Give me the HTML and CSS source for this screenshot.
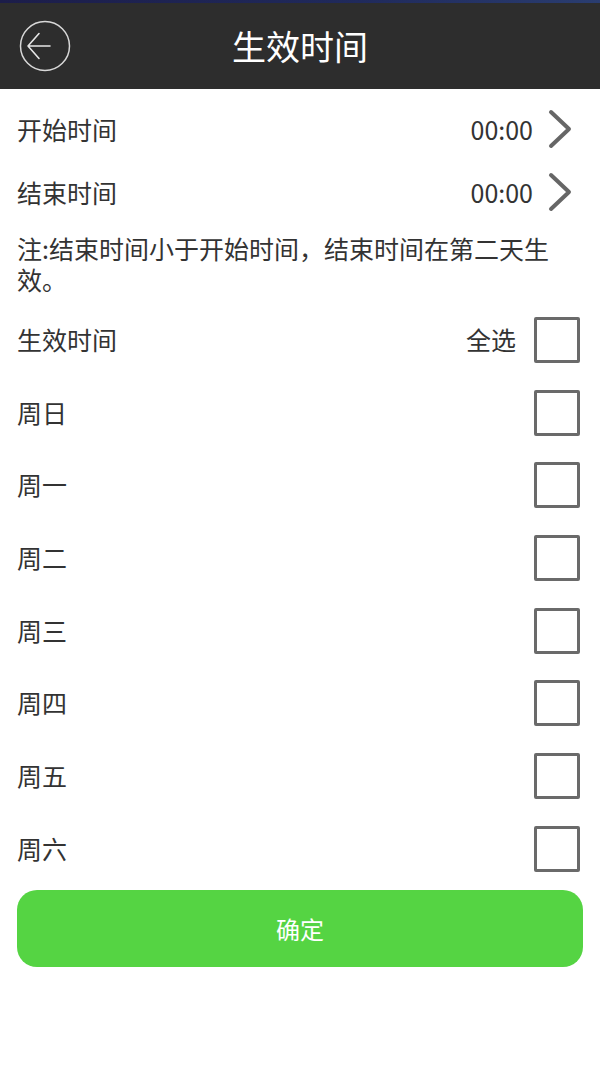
FILE: index.html
```html
<!DOCTYPE html>
<html lang="zh-CN">
<head>
    <meta charset="UTF-8">
    <meta name="viewport" content="width=device-width, initial-scale=1.0">
    <title>生效时间</title>
    <link rel="stylesheet" href="styles.css">
</head>
<body>
    <div class="status"></div>
    <header class="header">
        <button class="back" type="button">
            <svg width="52" height="52" viewBox="0 0 52 52">
                <circle cx="26" cy="26" r="24.5" fill="none" stroke="#d8d8d8" stroke-width="1.5"/>
                <path d="M9 26 H31 M20 13.5 L9 26 L20 38.5" fill="none" stroke="#e6e6e6" stroke-width="1.6" stroke-linecap="round" stroke-linejoin="round"/>
            </svg>
        </button>
        <h1 class="title">生效时间</h1>
    </header>

    <main class="content">
        <div class="time-row">
            <span>开始时间</span>
            <span class="time-value">00:00
                <svg class="chevron" width="26" height="40" viewBox="0 0 26 40">
                    <path d="M4 3 L22 20 L4 37" fill="none" stroke="#666" stroke-width="4" stroke-linecap="round" stroke-linejoin="round"/>
                </svg>
            </span>
        </div>
        <div class="time-row">
            <span>结束时间</span>
            <span class="time-value">00:00
                <svg class="chevron" width="26" height="40" viewBox="0 0 26 40">
                    <path d="M4 3 L22 20 L4 37" fill="none" stroke="#666" stroke-width="4" stroke-linecap="round" stroke-linejoin="round"/>
                </svg>
            </span>
        </div>

        <p class="note">注:结束时间小于开始时间，结束时间在第二天生效。</p>

        <div class="day-row">
            <span>生效时间</span>
            <label class="check-wrap">全选 <span class="box"></span></label>
        </div>
        <div class="day-row"><span>周日</span><span class="box"></span></div>
        <div class="day-row"><span>周一</span><span class="box"></span></div>
        <div class="day-row"><span>周二</span><span class="box"></span></div>
        <div class="day-row"><span>周三</span><span class="box"></span></div>
        <div class="day-row"><span>周四</span><span class="box"></span></div>
        <div class="day-row"><span>周五</span><span class="box"></span></div>
        <div class="day-row"><span>周六</span><span class="box"></span></div>

        <button class="confirm" type="button">确定</button>
    </main>
</body>
</html>
```

FILE: styles.css
```css
body {
    margin: 0;
    background-color: #fff;
    font-family: "Noto Sans CJK SC", "Noto Sans", sans-serif;
    color: #333;
}

.status {
    height: 3px;
    background: linear-gradient(to right, #1c1d4a, #202a5c 60%, #2a3d70);
}

.header {
    height: 86px;
    background-color: #2d2d2d;
    display: flex;
    align-items: center;
    justify-content: center;
    position: relative;
}

.back {
    position: absolute;
    left: 19px;
    top: 17px;
    padding: 0;
    border: none;
    background: none;
    display: block;
}

.back svg {
    display: block;
}

.title {
    margin: 0;
    color: #fff;
    font-size: 34px;
    font-weight: normal;
    line-height: 1;
}

.content {
    padding: 8px 20px 0 17px;
}

.time-row {
    height: 63px;
    display: flex;
    align-items: center;
    justify-content: space-between;
    font-size: 25px;
}

.time-value {
    display: flex;
    align-items: center;
    gap: 14px;
}

.chevron {
    display: block;
    margin-right: 7px;
}

.note {
    margin: 0;
    padding: 9.5px 30px 8px 0;
    font-size: 25px;
    line-height: 31px;
}

.day-row {
    height: 72.7px;
    display: flex;
    align-items: center;
    justify-content: space-between;
    font-size: 25px;
}

.day-row .box {
    margin-top: 2px;
}

.check-wrap {
    display: flex;
    align-items: center;
    gap: 18px;
}

.box {
    width: 40px;
    height: 40px;
    border: 3px solid #6a6a6a;
    border-radius: 2px;
    display: block;
}

.confirm {
    display: block;
    width: 566px;
    height: 77px;
    margin-top: 6px;
    border: none;
    border-radius: 20px;
    background-color: #55d443;
    color: #fff;
    font-family: inherit;
    font-size: 24px;
}
```
